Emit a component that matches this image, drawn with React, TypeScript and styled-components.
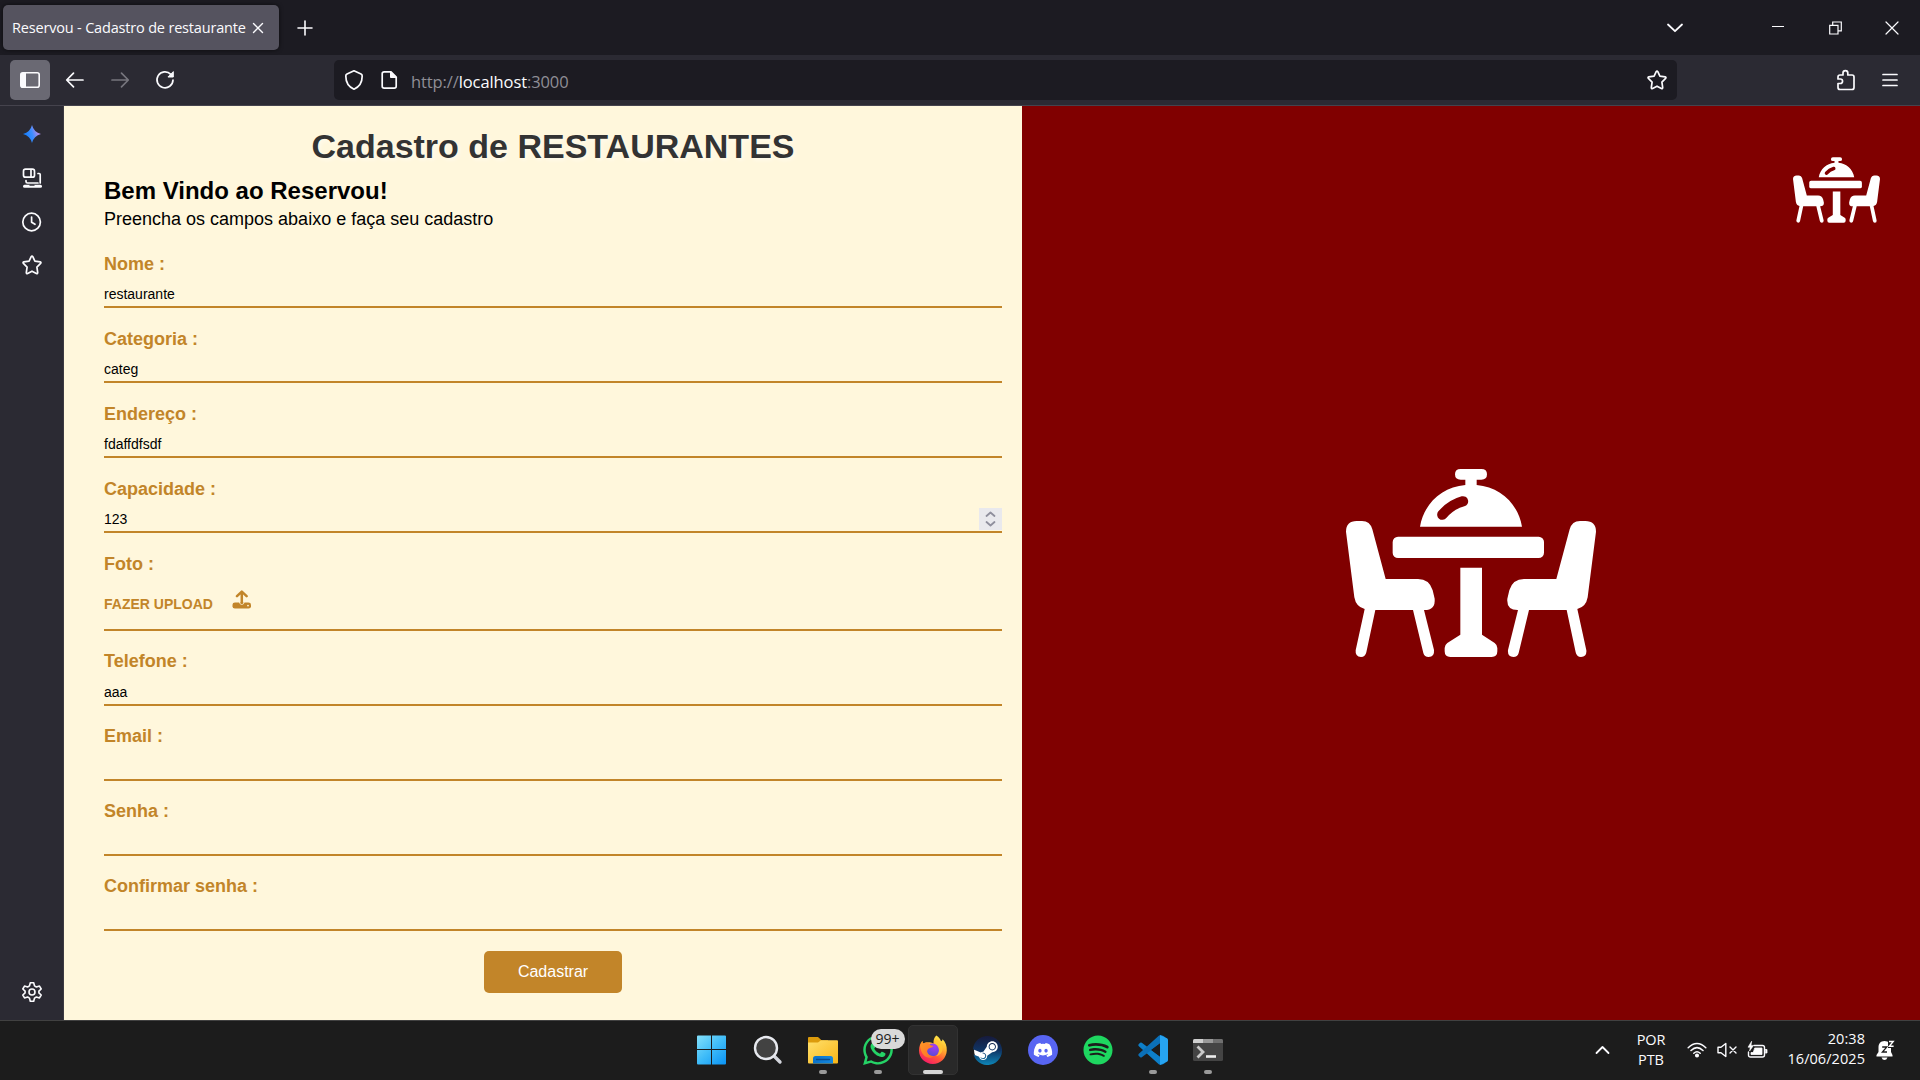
import React from "react";
import styled, { createGlobalStyle, css } from "styled-components";
import { FaDiscord, FaSpotify, FaSteam, FaWhatsapp } from "react-icons/fa";

const Global = createGlobalStyle`
  *, *::before, *::after { box-sizing: border-box; }
  body { margin: 0; background: #1c1b22; overflow: hidden; }
  svg { display: block; flex: none; }
`;

const gold = "#c28529";
const cream = "#fff7dc";
const ui = `"Open Sans", "Noto Sans", sans-serif`;
const arial = `"Liberation Sans", Arial, sans-serif`;

const Screen = styled.div`
  width: 1920px;
  height: 1080px;
  display: grid;
  grid-template-rows: 55px 51px 914px 60px;
  overflow: hidden;
  font-family: ${ui};
  color: #fbfbfe;
`;

/* ---------- browser chrome ---------- */
const TabBar = styled.header`
  display: flex;
  align-items: center;
  background: #1c1b22;
  padding-left: 3px;
`;
const Tab = styled.div`
  width: 276px;
  height: 45px;
  display: flex;
  align-items: center;
  justify-content: space-between;
  padding: 0 15px 0 9px;
  border-radius: 5px;
  background: #55535f;
  box-shadow: 0 0 4px rgba(0, 0, 0, 0.6);
  white-space: nowrap;
`;
const TabTitle = styled.span`
  padding-top: 1px;
  font-size: 14.5px;
  letter-spacing: -0.18px;
  line-height: 20px;
`;
const NewTab = styled.div`
  margin: 1px 0 0 18px;
`;
const WindowControls = styled.div`
  display: flex;
  align-items: center;
  margin-left: auto;
  padding-right: 21px;
`;
const Control = styled.div<{ $gap: number }>`
  margin-right: ${(p) => p.$gap}px;
`;
const NavBar = styled.nav`
  display: flex;
  align-items: center;
  background: #2b2a33;
  border-bottom: 1px solid #45434d;
  padding: 0 22px 0 10px;
`;
const SidebarToggle = styled.div`
  width: 40px;
  height: 40px;
  display: grid;
  place-items: center;
  border-radius: 5px;
  background: #6a6973;
`;
const NavButtons = styled.div`
  display: flex;
  align-items: center;
  gap: 25px;
  padding-left: 15px;
  width: 284px;
`;
const UrlBar = styled.div`
  width: 1343px;
  height: 40px;
  display: flex;
  align-items: center;
  padding: 0 10px;
  border-radius: 5px;
  background: #1c1b22;
`;
const Url = styled.span`
  flex: 1;
  padding: 3px 0 0 13px;
  font-size: 16.5px;
  letter-spacing: -0.1px;
  line-height: 22px;
  color: #8f8e96;
  b { font-weight: 400; color: #fbfbfe; }
`;
const NavRight = styled.div`
  margin-left: auto;
  display: flex;
  align-items: center;
  gap: 26px;
`;
const Body = styled.div`
  display: grid;
  grid-template-columns: 64px 958px 898px;
`;
const Sidebar = styled.aside`
  display: flex;
  flex-direction: column;
  align-items: center;
  gap: 22px;
  padding: 17px 0 17px;
  background: #2b2a33;
  border-right: 1px solid #3b3941;
`;
const SidebarBottom = styled.div`
  margin-top: auto;
`;

/* ---------- page ---------- */
const FormPanel = styled.main`
  display: flex;
  flex-direction: column;
  padding: 18px 20px 0 40px;
  background: ${cream};
  font-family: ${arial};
  color: #000;
`;
const Title = styled.h1`
  margin: 0;
  height: 44px;
  text-align: center;
  font-size: 34px;
  line-height: 44px;
  color: #333;
  text-shadow: 2px 2px 4px rgba(255, 255, 255, 0.5);
`;
const Welcome = styled.h2`
  margin: 9px 0 0;
  font-size: 24px;
  line-height: 28px;
`;
const Intro = styled.p`
  margin: 4px 0 3px;
  font-size: 18px;
  line-height: 21px;
`;
const Field = styled.label<{ $upload?: boolean; $top?: number }>`
  display: flex;
  flex-direction: column;
  height: ${(p) => (p.$upload ? 98 : 75)}px;
  padding-top: ${(p) => p.$top ?? 20}px;
  border-bottom: 2px solid ${gold};
`;
const Label = styled.span`
  height: 24px;
  font-size: 18px;
  font-weight: 700;
  line-height: 22px;
  color: ${gold};
`;
const ValueRow = styled.div`
  display: flex;
  align-items: center;
  justify-content: space-between;
  height: 22px;
  margin: auto 0 1px;
  font-size: 14px;
  line-height: 16px;
`;
const Spinner = styled.span`
  display: grid;
  place-items: center;
  width: 23px;
  height: 22px;
  background: #e9e9ed;
`;
const Upload = styled.div`
  display: flex;
  align-items: center;
  gap: 19px;
  padding-top: 12px;
  font-size: 14px;
  font-weight: 700;
  line-height: 30px;
  color: ${gold};
  svg { margin-bottom: 9px; }
`;
const Submit = styled.button`
  align-self: center;
  width: 138px;
  height: 42px;
  margin-top: 20px;
  padding: 0;
  border: 0;
  border-radius: 5px;
  background: ${gold};
  color: #fff;
  font: 16px ${arial};
`;
const BrandPanel = styled.section`
  display: grid;
  background: #800000;
  svg { grid-area: 1 / 1; }
`;
const cornerLogo = css`
  width: 87px;
  height: 66px;
  place-self: start end;
  margin: 51px 40px 0 0;
`;
const centerLogo = css`
  width: 250px;
  height: 188px;
  place-self: center;
`;
const Logo = styled.svg<{ $corner?: boolean }>`
  ${(p) => (p.$corner ? cornerLogo : centerLogo)}
`;

/* ---------- taskbar ---------- */
const Taskbar = styled.footer`
  display: grid;
  grid-template-columns: 685px 550px 1fr;
  background: #1c1c1c;
  border-top: 1px solid #414141;
`;
const Apps = styled.div`
  grid-column: 2;
  display: grid;
  grid-template-columns: repeat(10, 55px);
  align-items: center;
  justify-items: center;
  padding-bottom: 1px;
`;
const AppSlot = styled.div<{ $active?: boolean }>`
  position: relative;
  width: 50px;
  height: 50px;
  display: grid;
  place-items: center;
  border-radius: 5px;
  border: 1px solid ${(p) => (p.$active ? "#323232" : "transparent")};
  background: ${(p) => (p.$active ? "#292929" : "transparent")};
`;
const Indicator = styled.span<{ $wide?: boolean }>`
  position: absolute;
  bottom: 0;
  left: 50%;
  transform: translateX(-50%);
  width: ${(p) => (p.$wide ? 20 : 8)}px;
  height: 4px;
  border-radius: 2px;
  background: ${(p) => (p.$wide ? "#d6d6d6" : "#9a9a9a")};
`;
const Badge = styled.span`
  position: absolute;
  left: 17px;
  top: 3px;
  width: 34px;
  height: 20px;
  border-radius: 10px;
  background: #d9d9d9;
  color: #1c1c1c;
  font-size: 14px;
  line-height: 20px;
  text-align: center;
`;
const Tray = styled.div`
  display: flex;
  align-items: center;
  justify-content: flex-end;
  padding: 0 25px 2px 0;
  font-size: 14.5px;
  line-height: 20px;
`;
const Language = styled.div`
  width: 30px;
  margin: 0 21px 0 26px;
  letter-spacing: -0.1px;
  text-align: center;
`;
const Status = styled.div`
  display: flex;
  align-items: center;
  gap: 10px;
`;
const Clock = styled.div`
  width: 88px;
  margin: -2px 11px 0 9px;
  letter-spacing: 0.06px;
  text-align: right;
  white-space: nowrap;
`;

type LineProps = { w: number; h: number; sw?: number; color?: string; children: React.ReactNode };
const Line = ({ w, h, sw = 1.6, color = "#fbfbfe", children }: LineProps) => (
  <svg width={w} height={h} viewBox={`0 0 ${w} ${h}`} fill="none" stroke={color} strokeWidth={sw} strokeLinecap="round" strokeLinejoin="round">
    {children}
  </svg>
);

const Star = () => (
  <Line w={20} h={20} sw={1.7}>
    <path d="M9.2 1.7Q10 .3 10.8 1.7L12.9 6.1L18.2 6.9Q19.5 7.3 18.6 8.4L14.9 12.1L15.7 17.6Q15.7 19 14.4 18.5L10 16.2L5.6 18.5Q4.3 19 4.3 17.6L5.1 12.1L1.4 8.4Q.5 7.3 1.8 6.9L7.1 6.1Z" />
  </Line>
);

const RestaurantLogo = ({ corner }: { corner?: boolean }) => (
  <Logo $corner={corner} viewBox="78 57 750 564" fill="#fff">
    <path d="M422 57H484Q501 57 501 73Q501 89 484 89H470V105C540 111 594 160 606 230H300C312 160 366 111 436 105V89H422Q405 89 405 73Q405 57 422 57Z" />
    <path d="M367 194Q392 164 429 154" fill="none" stroke="#800000" strokeWidth="31" strokeLinecap="round" />
    <rect x="218" y="260" width="454" height="64" rx="16" />
    <path d="M421 353H486V554L524 579Q532 585 532 594V604Q532 621 515 621H391Q374 621 374 604V594Q374 585 382 579L421 554Z" />
    <g id={corner ? "chair-small" : "chair"}>
      <path d="M78 245Q78 213 110 213H126Q150 213 157 238L197 387H294Q328 387 338 421L344 446Q347 480 313 480H312L342 600Q344 621 326 621Q313 621 310 609L279 480H166L139 607Q136 621 123 621Q105 620 107 601L134 477Q108 471 103 442Z" />
    </g>
    <use href={corner ? "#chair-small" : "#chair"} transform="translate(906 0) scale(-1 1)" />
  </Logo>
);

const FirefoxIcon = () => (
  <svg width="30" height="30" viewBox="0 0 30 30">
    <defs>
      <linearGradient id="fx-body" x1=".8" y1="0" x2=".25" y2="1">
        <stop offset="0" stopColor="#fff44f" /><stop offset=".35" stopColor="#ffb02e" />
        <stop offset=".65" stopColor="#ff5a36" /><stop offset="1" stopColor="#f5156c" />
      </linearGradient>
      <radialGradient id="fx-globe" cx=".65" cy=".2" r=".8">
        <stop offset="0" stopColor="#a63cf5" /><stop offset="1" stopColor="#5b4bd6" />
      </radialGradient>
      <linearGradient id="fx-tail" x1="0" y1="0" x2="1" y2="1">
        <stop offset="0" stopColor="#ff9a24" /><stop offset="1" stopColor="#ff6a2b" />
      </linearGradient>
    </defs>
    <path d="M18.3.5C21 2.2 22.4 4.4 23 6.3C24 6 24.5 5 24.6 4.2C27.5 7 29 11 28.8 15.5C28.5 23.2 22.3 29 14.8 29C7 29 1 23 1 15.6C1 11 2.4 8.5 4.5 6C4.5 7.2 4.8 8 5.1 8.5C8 6.5 13 7 15.5 8.5C15.3 5 16.3 2.2 18.3.5Z" fill="url(#fx-body)" />
    <circle cx="14.8" cy="14.8" r="6.4" fill="url(#fx-globe)" />
    <path d="M2 10.5C3 7.5 4.2 6.2 4.5 6C4.5 7.2 4.8 8 5.1 8.5C7.4 7.2 9.8 7.5 11.2 9C12.6 10.5 14 10.6 15.4 10.8C14.7 12.8 12.2 12.8 10.8 13.4C9.4 14.3 9 15.7 9.2 17C10 20.2 13.5 21.5 16 21C11.5 25 3.2 22.5 2 10.5Z" fill="url(#fx-tail)" />
    <path d="M16.2 8.5C19 10 21.2 12.3 20.9 16.3C20.7 18.6 19.5 20.3 18 21.2C22.6 20.3 25 16.5 24.5 12.3C24 8.6 21 6.6 18.5 4Z" fill="#ffc830" opacity=".8" />
  </svg>
);

const TopBar = () => (
  <TabBar>
    <Tab>
      <TabTitle>Reservou - Cadastro de restaurante</TabTitle>
      <Line w={12} h={12} sw={1.4}><path d="M1.5 1.5L10.5 10.5M10.5 1.5L1.5 10.5" /></Line>
    </Tab>
    <NewTab><Line w={16} h={16} sw={1.6}><path d="M8 1V15M1 8H15" /></Line></NewTab>
    <WindowControls>
      <Control $gap={89}><Line w={16} h={10} sw={1.8}><path d="M1 1.5L8 8.2L15 1.5" /></Line></Control>
      <Control $gap={45}><Line w={12} h={4} sw={1}><path d="M0 .5H12" strokeLinecap="butt" /></Line></Control>
      <Control $gap={43}>
        <Line w={13} h={14} sw={1.2}><path d="M.7 4.3H9V13H.7ZM3.7 4V1H12.3V9.8H9.3" strokeLinejoin="miter" /></Line>
      </Control>
      <Line w={14} h={14} sw={1.2}><path d="M1 1L13 13M13 1L1 13" /></Line>
    </WindowControls>
  </TabBar>
);

const AddressBar = () => (
  <NavBar>
    <SidebarToggle>
      <svg width="20" height="16" viewBox="0 0 20 16"><rect x=".8" y=".8" width="18.4" height="14.4" rx="2" fill="none" stroke="#fbfbfe" strokeWidth="1.6" /><path d="M1 1H6V15H1Z" fill="#fbfbfe" /></svg>
    </SidebarToggle>
    <NavButtons>
      <Line w={20} h={18} sw={1.7}><path d="M8.5 2.2L1.7 9L8.5 15.8M2 9H18" /></Line>
      <Line w={20} h={18} sw={1.7} color="#77767e"><path d="M11.5 2.2L18.3 9L11.5 15.8M18 9H2" /></Line>
      <Line w={20} h={20} sw={1.7}><path d="M15.8 4.3A8 8 0 1 0 18 10" /><path d="M18.3 2V7H13.3Z" fill="#fbfbfe" strokeWidth="1" /></Line>
    </NavButtons>
    <UrlBar>
      <Line w={20} h={22} sw={1.7}><path d="M10 1.8L17 5Q18.2 5.6 18.2 7C18.2 13 15 18 10 20.2C5 18 1.8 13 1.8 7Q1.8 5.6 3 5Z" /></Line>
      <Line w={34} h={20} sw={1.7}>
        <path d="M20.2 1.8H27L32.2 7V16.3Q32.2 18.2 30.2 18.2H20.2Q18.2 18.2 18.2 16.3V3.7Q18.2 1.8 20.2 1.8Z" />
        <path d="M26.5 1.8V7.5H32.2Z" fill="#fbfbfe" strokeWidth="1" />
      </Line>
      <Url>http://<b>localhost</b>:3000</Url>
      <Star />
    </UrlBar>
    <NavRight>
      <Line w={20} h={22} sw={1.7}>
        <path d="M4 6H7V4A2.4 2.4 0 0 1 11.8 4V6H16Q18 6 18 8V18.5Q18 20.5 16 20.5H4Q2 20.5 2 18.5V14.5H4.3A2.2 2.2 0 0 0 4.3 10H2V8Q2 6 4 6Z" />
      </Line>
      <Line w={16} h={16} sw={1.7}><path d="M1 2.5H15M1 8H15M1 13.5H15" /></Line>
    </NavRight>
  </NavBar>
);

const SideNav = () => (
  <Sidebar>
    <svg width="22" height="22" viewBox="0 0 22 22">
      <defs><linearGradient id="spark" x1="0" y1=".6" x2="1" y2=".3"><stop offset=".1" stopColor="#157efb" /><stop offset=".5" stopColor="#3d8dff" /><stop offset=".8" stopColor="#a78bea" /></linearGradient></defs>
      <path d="M11 2Q12.8 9.2 20 11Q12.8 12.8 11 20Q9.2 12.8 2 11Q9.2 9.2 11 2Z" fill="url(#spark)" />
    </svg>
    <Line w={22} h={22} sw={1.7}>
      <rect x="2.5" y="2.2" width="11" height="8" rx="2" /><path d="M10 2.5V10M17 6.5H18.2Q19.2 6.5 19.2 7.5V16M5 13.5V14.5Q5 16 6.5 16H17" /><path d="M3.5 19.2H19.5" strokeWidth="3" /><path d="M9 18.2H13" stroke="#2b2a33" strokeWidth="1.2" />
    </Line>
    <Line w={22} h={22} sw={1.7}><circle cx="10.6" cy="11" r="8.8" /><path d="M10.6 6V11.2L14 13.3" /></Line>
    <Star />
    <SidebarBottom>
      <Line w={22} h={22} sw={1.6}>
        <circle cx="11" cy="11" r="3" />
        <path d="M9.3 1.8H12.7L13.5 4.9L15.4 6L18.5 5.1L20.2 8L17.9 10.2V11.8L20.2 14L18.5 16.9L15.4 16L13.5 17.1L12.7 20.2H9.3L8.5 17.1L6.6 16L3.5 16.9L1.8 14L4.1 11.8V10.2L1.8 8L3.5 5.1L6.6 6L8.5 4.9Z" />
      </Line>
    </SidebarBottom>
  </Sidebar>
);

type FieldData = { label: string; value: string; spin?: boolean };
const before: FieldData[] = [
  { label: "Nome :", value: "restaurante" },
  { label: "Categoria :", value: "categ" },
  { label: "Endereço :", value: "fdaffdfsdf" },
  { label: "Capacidade :", value: "123", spin: true },
];
const after: FieldData[] = [
  { label: "Telefone :", value: "aaa" },
  { label: "Email :", value: "" },
  { label: "Senha :", value: "" },
  { label: "Confirmar senha :", value: "" },
];

const TextField = ({ label, value, spin, top }: FieldData & { top?: number }) => (
  <Field $top={top}>
    <Label>{label}</Label>
    <ValueRow>
      <span>{value}</span>
      {spin && (
        <Spinner>
          <Line w={11} h={16} sw={1.8} color="#8f8f9d"><path d="M1.5 5L5.5 1.5L9.5 5M1.5 11L5.5 14.5L9.5 11" /></Line>
        </Spinner>
      )}
    </ValueRow>
  </Field>
);

const RegisterForm = () => (
  <FormPanel>
    <Title>Cadastro de RESTAURANTES</Title>
    <Welcome>Bem Vindo ao Reservou!</Welcome>
    <Intro>Preencha os campos abaixo e faça seu cadastro</Intro>
    {before.map((f) => <TextField key={f.label} {...f} />)}
    <Field $upload>
      <Label>Foto :</Label>
      <Upload>
        FAZER UPLOAD
        <svg width="20" height="20" viewBox="0 0 20 20" fill="none" stroke={gold} strokeLinecap="round" strokeLinejoin="round">
          <path d="M3 12.6H16.4Q19 12.6 19 14.8V16.2Q19 18.4 16.6 18.4H2.9Q.5 18.4.5 16.2V14.8Q.5 12.6 3 12.6Z" fill={gold} stroke="none" />
          <path d="M7.4 12.2Q7.6 14.4 9.8 14.4Q12 14.4 12.2 12.2" stroke={cream} strokeWidth=".9" />
          <path d="M9.8 12.8V2M5 6.2L9.8 1.6L14.6 6.2" strokeWidth="2.5" />
          <circle cx="16" cy="15.6" r=".9" fill={cream} stroke="none" />
        </svg>
      </Upload>
    </Field>
    {after.map((f) => <TextField key={f.label} {...f} top={19} />)}
    <Submit>Cadastrar</Submit>
  </FormPanel>
);

const BottomBar = () => (
  <Taskbar>
    <Apps>
      <AppSlot>
        <svg width="32" height="30" viewBox="0 0 32 30">
          <defs><linearGradient id="win" gradientUnits="userSpaceOnUse" x1="1" y1="0" x2="28" y2="30"><stop stopColor="#83e0fb" /><stop offset=".5" stopColor="#3fbcf8" /><stop offset="1" stopColor="#0a93f5" /></linearGradient></defs>
          <path d="M0 1.5Q0 .5 1 .5H14V14H0ZM15 .5H28Q29 .5 29 1.5V14H15ZM0 15H14V29.5H1Q0 29.5 0 28.5ZM15 15H29V28.5Q29 29.5 28 29.5H15Z" fill="url(#win)" />
        </svg>
      </AppSlot>
      <AppSlot>
        <svg width="30" height="30" viewBox="0 0 30 30"><path d="M20 20L27 27" stroke="#d3d5dc" strokeWidth="3.4" strokeLinecap="round" /><circle cx="13" cy="13" r="11" fill="#424242" stroke="#e7e9ef" strokeWidth="2.4" /></svg>
      </AppSlot>
      <AppSlot>
        <svg width="30" height="28" viewBox="0 0 30 28">
          <defs><linearGradient id="folder" x1="0" y1="0" x2="1" y2="1"><stop stopColor="#ffe06c" /><stop offset="1" stopColor="#f9b617" /></linearGradient><linearGradient id="tray" x1="0" x2="1"><stop stopColor="#0b72c9" /><stop offset="1" stopColor="#1488df" /></linearGradient></defs>
          <path d="M0 2Q0 1 1 1H10L13.5 4.3H20V14H0Z" fill="#dc9b0c" /><path d="M0 6.5H10L13 4.3H29Q30 4.3 30 5.3V26.5Q30 27.5 29 27.5H1Q0 27.5 0 26.5Z" fill="url(#folder)" />
          <path d="M5 27.5V22.5Q5 20 7.5 20H22.5Q25 20 25 22.5V27.5Z" fill="url(#tray)" /><path d="M8.5 23.5H21.5" stroke="#0a4b8f" strokeWidth="1.3" strokeLinecap="round" />
        </svg>
        <Indicator />
      </AppSlot>
      <AppSlot>
        <FaWhatsapp size={34} color="#25d366" />
        <Badge>99+</Badge>
        <Indicator />
      </AppSlot>
      <AppSlot $active>
        <FirefoxIcon />
        <Indicator $wide />
      </AppSlot>
      <AppSlot>
        <svg width="29" height="29" viewBox="0 0 29 29">
          <defs><linearGradient id="steam" x1="0" y1="0" x2="0" y2="1"><stop stopColor="#171a3c" /><stop offset=".5" stopColor="#0f3565" /><stop offset="1" stopColor="#0d86b8" /></linearGradient></defs>
          <circle cx="14.5" cy="14.5" r="13.4" fill="#fff" />
          <FaSteam size={30} x={-0.5} y={-0.5} fill="url(#steam)" />
        </svg>
      </AppSlot>
      <AppSlot>
        <svg width="30" height="30" viewBox="0 0 30 30"><circle cx="15" cy="15" r="15" fill="#5865f2" /><FaDiscord size={20} x={5} y={5} color="#fff" /></svg>
      </AppSlot>
      <AppSlot><FaSpotify size={30} color="#1ed760" /></AppSlot>
      <AppSlot>
        <svg width="30" height="30" viewBox="0 0 30 30">
          <path d="M.6 9.2L2.2 7.7Q3 7.2 3.8 7.8L28 26Q27 29.5 22 29.7Q21 29.7 20.5 29L.6 11Q0 10.1.6 9.2Z" fill="#0d7fc9" />
          <path d="M.6 20.8L2.2 22.3Q3 22.8 3.8 22.2L28 4Q27 .5 22 .3Q21 .3 20.5 1L.6 19Q0 19.9.6 20.8Z" fill="#0b70b8" />
          <path d="M22 0L29 3.2Q30 3.8 30 5V25Q30 26.2 29 26.8L22 30Z" fill="#26a4f2" />
          <path d="M22 8.5V21.5L13.2 15Z" fill="#1c1c1c" />
        </svg>
        <Indicator />
      </AppSlot>
      <AppSlot>
        <svg width="30" height="22" viewBox="0 0 30 22"><rect width="30" height="22" rx="1.5" fill="#444" /><path d="M0 4V1.5Q0 0 1.5 0H10V4Z" fill="#cfcfcf" /><path d="M10 0H20V4H10Z" fill="#999" /><path d="M20 0H28.5Q30 0 30 1.5V4H20Z" fill="#707070" /><path d="M4.5 7.5L10 13L4.5 18.5" fill="none" stroke="#c9c9c9" strokeWidth="2.8" /><path d="M13 17.5H23" stroke="#ededed" strokeWidth="2.6" /></svg>
        <Indicator />
      </AppSlot>
    </Apps>
    <Tray>
      <Line w={15} h={10} sw={1.8}><path d="M1.5 8L7.5 2L13.5 8" /></Line>
      <Language>POR<br />PTB</Language>
      <Status>
        <Line w={20} h={17} sw={1.5}><path d="M1.2 6.7Q10-1.6 18.8 6.7M4 9.5Q10 3.8 16 9.5M6.8 12.2Q10 9.2 13.2 12.2" /><circle cx="10" cy="14.5" r="1.3" fill="#fff" /></Line>
        <Line w={20} h={16} sw={1.4}><path d="M1 5.2H4L8.8 1.5V14.5L4 10.8H1ZM13 5L19 11M19 5L13 11" /></Line>
        <Line w={21} h={18} sw={1.4}><path d="M7 4.5H15.5Q17.5 4.5 17.5 6.5V14Q17.5 16 15.5 16H3.5Q1.5 16 1.5 14V11" /><path d="M18.5 8.5H20V12H18.5Z" fill="#fff" strokeWidth=".8" /><path d="M8 7H15V13.5H4V11.5H6Z" fill="#fff" strokeWidth=".8" /><path d="M4.5.5L1 6.2H3.2L2.6 10L6.5 4.4H4.2Z" fill="#fff" strokeWidth=".6" /></Line>
      </Status>
      <Clock>20:38<br />16/06/2025</Clock>
      <svg width="19" height="20" viewBox="0 0 19 20">
        <path d="M8.5 1C4.5 1 2.5 3.8 2.5 7V12L.5 15V16.5H16.5V15L15 12V7C15 3.8 12.5 1 8.5 1Z" fill="#fff" /><path d="M5.5 17.5H11.5Q10.5 20 8.5 20Q6.5 20 5.5 17.5Z" fill="#fff" />
        <path d="M6.2 7H10.8L6.4 12H11" fill="none" stroke="#1c1c1c" strokeWidth="1.3" /><path d="M12 0H19V8H12Z" fill="#1c1c1c" /><path d="M13 1.5H17.2L13.3 6.3H17.6" fill="none" stroke="#fff" strokeWidth="1.4" />
      </svg>
    </Tray>
  </Taskbar>
);

export default function App() {
  return (
    <>
      <Global />
      <Screen>
        <TopBar />
        <AddressBar />
        <Body>
          <SideNav />
          <RegisterForm />
          <BrandPanel>
            <RestaurantLogo corner />
            <RestaurantLogo />
          </BrandPanel>
        </Body>
        <BottomBar />
      </Screen>
    </>
  );
}
